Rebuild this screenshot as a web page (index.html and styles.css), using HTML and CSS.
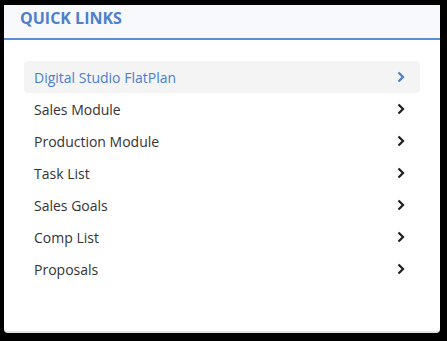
FILE: index.html
```html
<!DOCTYPE html>
<html>
<head>
<meta charset="utf-8">
<link rel="stylesheet" href="styles.css">
</head>
<body>
<div class="panel">
  <div class="panel-header"><h2 class="title">QUICK LINKS</h2></div>
  <ul class="links">
    <li class="link active"><span>Digital Studio FlatPlan</span><svg class="chev" viewBox="0 0 8 12" width="8" height="12"><polyline points="1.5,1.5 6,6 1.5,10.5"/></svg></li>
    <li class="link"><span>Sales Module</span><svg class="chev" viewBox="0 0 8 12" width="8" height="12"><polyline points="1.5,1.5 6,6 1.5,10.5"/></svg></li>
    <li class="link"><span>Production Module</span><svg class="chev" viewBox="0 0 8 12" width="8" height="12"><polyline points="1.5,1.5 6,6 1.5,10.5"/></svg></li>
    <li class="link"><span>Task List</span><svg class="chev" viewBox="0 0 8 12" width="8" height="12"><polyline points="1.5,1.5 6,6 1.5,10.5"/></svg></li>
    <li class="link"><span>Sales Goals</span><svg class="chev" viewBox="0 0 8 12" width="8" height="12"><polyline points="1.5,1.5 6,6 1.5,10.5"/></svg></li>
    <li class="link"><span>Comp List</span><svg class="chev" viewBox="0 0 8 12" width="8" height="12"><polyline points="1.5,1.5 6,6 1.5,10.5"/></svg></li>
    <li class="link"><span>Proposals</span><svg class="chev" viewBox="0 0 8 12" width="8" height="12"><polyline points="1.5,1.5 6,6 1.5,10.5"/></svg></li>
  </ul>
</div>
</body>
</html>
```
FILE: styles.css
```css
html, body {
  margin: 0;
  padding: 0;
  background: #000;
  height: 100%;
}
body {
  padding: 5px 7px 8px 4px;
  box-sizing: border-box;
  font-family: "Open Sans", "Noto Sans", sans-serif;
}
.panel {
  background: #fff;
  height: 328px;
  box-sizing: border-box;
  border-bottom: 2px solid #e2e3e6;
  border-radius: 0 0 4px 4px;
}
.panel-header {
  height: 33px;
  background: #f8f9fc;
  border-bottom: 2px solid #5b8dd9;
  padding-left: 16px;
  display: flex;
  align-items: center;
}
.title {
  margin: 0;
  font-size: 16px;
  font-weight: 700;
  color: #4e80cb;
  position: relative;
  top: -4px;
}
.links {
  list-style: none;
  margin: 21px 20px 0 20px;
  padding: 0;
}
.link {
  height: 32px;
  display: flex;
  align-items: center;
  justify-content: space-between;
  padding: 0 15px 0 10px;
  font-size: 14px;
  color: #333;
  border-radius: 4px;
}
.link.active {
  background: #f4f4f5;
  color: #4a7fcf;
}
.chev {
  fill: none;
  stroke: #222;
  stroke-width: 2.3;
}
.link.active .chev {
  stroke: #4a7fcf;
}
```
